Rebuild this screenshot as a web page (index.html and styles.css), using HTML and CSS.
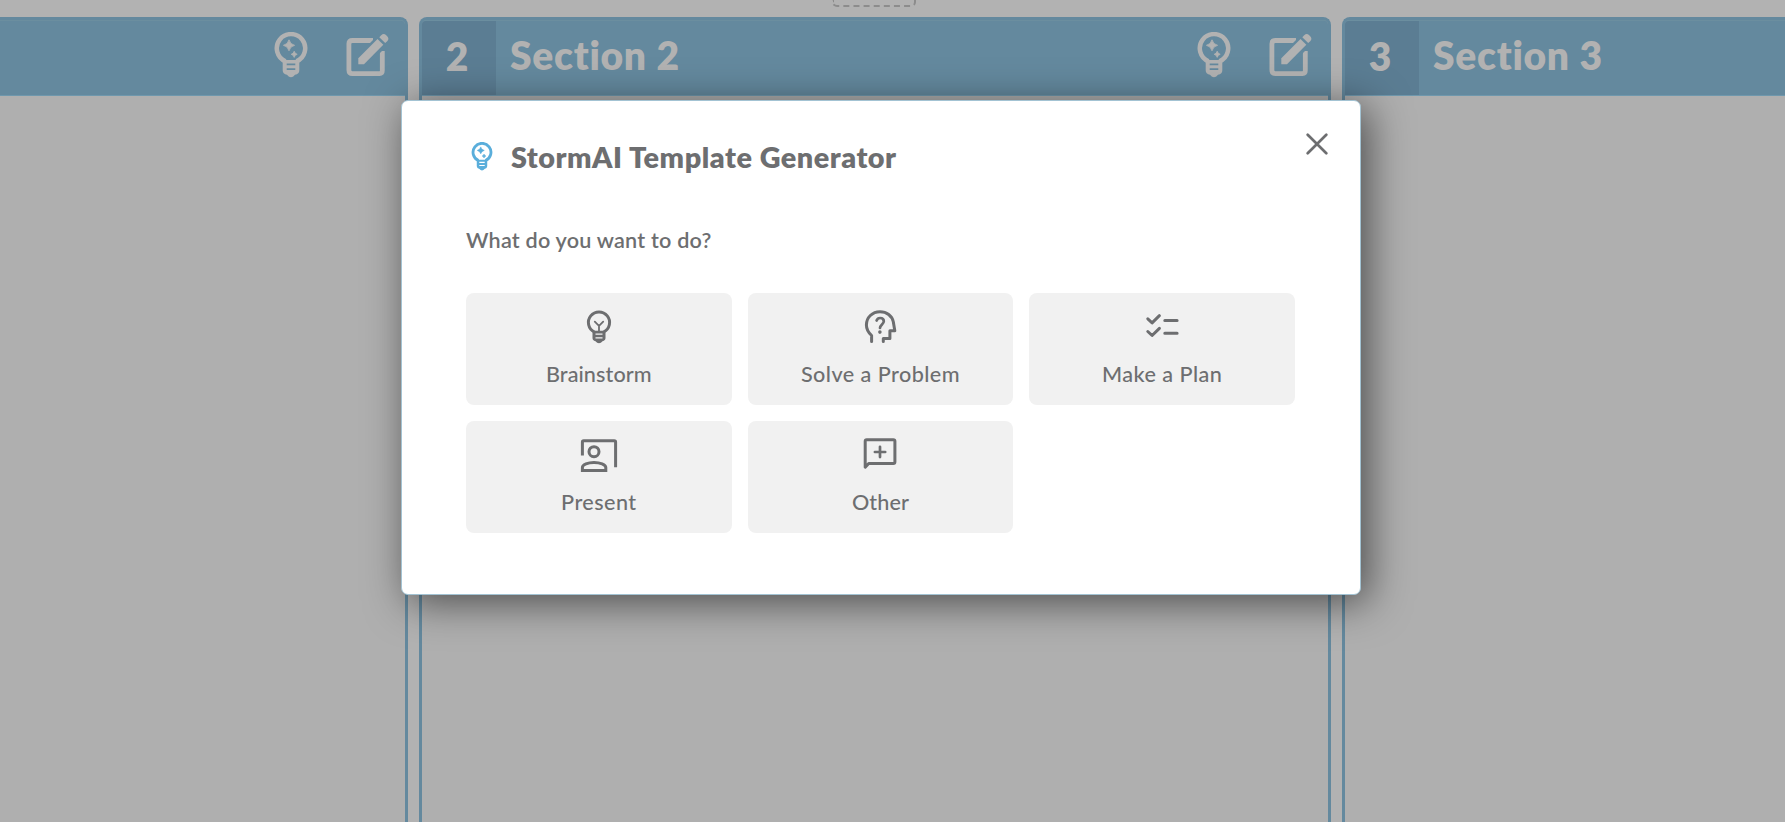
FILE: index.html
```html
<!DOCTYPE html>
<html lang="en">
<head>
<meta charset="utf-8">
<title>StormAI Template Generator</title>
<link rel="stylesheet" href="styles.css">
</head>
<body>
<svg class="defs" width="0" height="0">
  <symbol id="ai-bulb" viewBox="0 0 34 46">
    <path d="M11.5 29.4A14.2 14.2 0 1 1 22.5 29.4" fill="none" stroke="currentColor" stroke-width="4.5"/>
    <path d="M8.7 28H25.3V38.5Q25.3 42 21 42.8L19.3 44.6Q17 46 14.7 44.6L13 42.8Q8.7 42 8.7 38.5Z" fill="currentColor"/>
    <path class="cut" d="M12.7 32.3H21.3M12.7 37.2H21.3" fill="none" stroke-width="1.8"/>
    <path d="M15 7.8Q16.2 12.5 20.6 13.3Q16.2 14.2 15 18.8Q13.8 14.2 9.4 13.3Q13.8 12.5 15 7.8Z" fill="currentColor" stroke="currentColor" stroke-width=".8"/>
    <path d="M20.2 19.2Q20.8 21.7 23.2 22.3Q20.8 22.9 20.2 25.4Q19.6 22.9 17.2 22.3Q19.6 21.7 20.2 19.2Z" fill="currentColor" stroke="currentColor" stroke-width=".8"/>
  </symbol>
  <symbol id="edit" viewBox="0 0 44 44">
    <path d="M27 7.5H6.5Q2.9 7.5 2.9 10.7V37Q2.9 40.6 6.5 40.6H33.5Q36.3 40.6 36.3 37.6V18" fill="none" stroke="currentColor" stroke-width="4.8"/>
    <path class="gap" d="M10 34V24L33 1L43 11L20 34Z"/>
    <path d="M12.3 31.2V25.2L31.5 6L37.3 11.8L18 31.2Z" fill="currentColor"/>
    <path d="M33.3 4.2L35.2 2.2Q37.7-.2 40.2 2.2L41.2 3.3Q43.6 5.7 41.2 8.2L39.2 10.1Z" fill="currentColor"/>
  </symbol>
</svg>
<main class="board">
  <div class="dropzone"></div>
  <section class="column first">
    <header class="bar">
      <svg class="bulb"><use href="#ai-bulb"/></svg>
      <svg class="pen"><use href="#edit"/></svg>
    </header>
  </section>
  <section class="column">
    <header class="bar">
      <span class="number">2</span><h2 class="name">Section 2</h2>
      <svg class="bulb"><use href="#ai-bulb"/></svg>
      <svg class="pen"><use href="#edit"/></svg>
    </header>
  </section>
  <section class="column last">
    <header class="bar">
      <span class="number">3</span><h2 class="name">Section 3</h2>
    </header>
  </section>
</main>
<div class="modal" role="dialog">
  <div class="head">
    <svg class="logo"><use href="#ai-bulb"/></svg>
    <h1 class="title">StormAI Template Generator</h1>
    <svg class="close" viewBox="0 0 22 22"><path d="M1.7 1.7L20.3 20.3M20.3 1.7L1.7 20.3"/></svg>
  </div>
  <p class="question">What do you want to do?</p>
  <div class="tiles">
    <div class="tile">
      <svg class="icon" viewBox="0 0 40 40"><path d="M15.3 26A10.6 10.6 0 1 1 24.7 26"/><path class="solid" d="M13.5 24.8H26.5V32Q26.5 34.5 23.5 35.2Q22 37.2 20 37.2T16.5 35.2Q13.5 34.5 13.5 32Z"/><path class="slit" d="M16.5 28.1H23.5M16.5 31.8H23.5"/><path class="thin" d="M20 26V19.8M15.8 15.6L20 19.8L24.2 15.6"/></svg>
      <span class="label tight">Brainstorm</span>
    </div>
    <div class="tile">
      <svg class="icon" viewBox="0 0 40 40"><path d="M11.6 35.5V29.5C8.2 26.4 6.4 23 6.4 19C6.4 11.5 12.3 5.7 20 5.7C26.7 5.7 32 9.7 33.3 15.8L34.8 24.8H29.9V32.6H23.3V35.5"/><path class="mid" d="M16.6 14.5C17.2 12.8 18.5 12 20.1 12C22.3 12 23.8 13.4 23.8 15.3C23.8 18.2 20 18.7 20 22"/><circle class="solid" cx="19.9" cy="26.1" r="1.8"/></svg>
      <span class="label">Solve a Problem</span>
    </div>
    <div class="tile">
      <svg class="icon" viewBox="0 0 40 40"><path d="M5.8 12.8L10.1 16.8L17.4 9.7M5.8 25.5L10.1 29.5L17.4 22.4M22.8 14.6H35.1M22.8 27.2H35.1"/></svg>
      <span class="label">Make a Plan</span>
    </div>
    <div class="tile">
      <svg class="icon" viewBox="0 0 40 40"><path class="butt" d="M3.4 21.5V8Q3.4 6.7 4.7 6.7H35.2Q36.6 6.7 36.6 8V33.2"/><circle cx="15" cy="17.7" r="5"/><path d="M3.4 36.5V33.5C3.4 30.5 9 28.4 15 28.4S26.8 30.5 26.8 33.5V36.5Z" class="butt"/></svg>
      <span class="label">Present</span>
    </div>
    <div class="tile">
      <svg class="icon" viewBox="0 0 40 40"><path d="M5.2 33.2V7.2Q5.2 5.7 6.7 5.7H33.3Q34.9 5.7 34.9 7.2V28Q34.9 29.4 33.3 29.4H8.7Z"/><path d="M14.9 18H25.2M20 12.8V23.1" class="mid"/></svg>
      <span class="label tight">Other</span>
    </div>
  </div>
</div>
</body>
</html>
```
FILE: styles.css
```css
* { box-sizing: border-box; }
body {
  margin: 0;
  height: 822px;
  overflow: hidden;
  background: #b2b2b2;
  color: #6d6e70;
  font-family: Lato, "Open Sans", sans-serif;
  font-variant-ligatures: none;
}
h1, h2, p { margin: 0; }
.defs { position: absolute; }
.board {
  display: grid;
  grid-template-columns: 408px 912px 1fr;
  grid-template-rows: 7px 1fr;
  column-gap: 11px;
  row-gap: 10px;
  height: 822px;
}
.dropzone {
  grid-column: 1 / -1;
  width: 84px;
  height: 7px;
  margin-left: 832px;
  border: 2px dashed #8c8c8c;
  border-top: 0;
  border-radius: 0 0 5px 5px;
}
.column {
  border: 3px solid #64899e;
  border-bottom: 0;
  border-radius: 8px 8px 0 0;
  background: #afafaf;
}
.first { border-left: 0; border-top-left-radius: 0; }
.last { border-right: 0; border-top-right-radius: 0; }
.bar {
  display: flex;
  align-items: flex-start;
  height: 76px;
  border-top: 1px solid #6b8e9f;
  border-bottom: 1px solid #6f98ad;
  border-radius: 4px 4px 0 0;
  background: #64899e;
  color: #b2b2b2;
  font-size: 39px;
  font-weight: 800;
  line-height: 69px;
}
.first .bar { justify-content: flex-end; border-top-left-radius: 0; }
.last .bar { border-top-right-radius: 0; }
.number {
  width: 74px;
  height: 74px;
  padding-right: 4px;
  border-radius: 4px 0 0 0;
  background: #5b7d93;
  text-align: center;
  font-size: 39px;
  line-height: 71px;
}
.name {
  flex: 1;
  padding-left: 14px;
  font: inherit;
  letter-spacing: .7px;
}
.bulb { width: 34px; height: 46px; margin-top: 11px; color: #b2b2b2; --cut: #64899e; }
.pen { width: 44px; height: 44px; margin: 12px 15px 0 38px; }
.cut { stroke: var(--cut); }
.gap { fill: #64899e; }

.modal {
  position: absolute;
  top: 100px;
  left: 401px;
  width: 960px;
  height: 495px;
  padding: 0 65px 0 64px;
  border: 1px solid #a3c3d3;
  border-radius: 7px;
  background: #fff;
  box-shadow: 7px 7px 42px rgba(0, 0, 0, .57);
}
.head { display: flex; align-items: flex-start; height: 114px; }
.logo { width: 22px; height: 29px; margin: 41px 18px 0 5px; color: #5aaedb; --cut: #fff; }
.title {
  flex: 1;
  padding-top: 37px;
  font-size: 28.8px;
  font-weight: 800;
  line-height: 39px;
  letter-spacing: .53px;
}
.close {
  width: 22px;
  height: 22px;
  margin: 32px -33px 0 0;
  fill: none;
  stroke: #6d6e70;
  stroke-width: 2.7;
  stroke-linecap: round;
}
.question {
  height: 78px;
  font-size: 21.6px;
  font-weight: 600;
  line-height: 51px;
  letter-spacing: .22px;
}
.tiles {
  display: grid;
  grid-template-columns: repeat(3, 1fr);
  grid-auto-rows: 112px;
  gap: 16px;
}
.tile {
  display: flex;
  flex-direction: column;
  align-items: center;
  padding-top: 13px;
  border-radius: 8px;
  background: #f1f1f1;
}
.icon {
  width: 40px;
  height: 40px;
  fill: none;
  stroke: #6d6e70;
  stroke-width: 3;
  stroke-linecap: round;
  stroke-linejoin: round;
}
.butt { stroke-linecap: butt; stroke-linejoin: miter; }
.solid { fill: #6d6e70; stroke: none; }
.slit { stroke: #f1f1f1; stroke-width: 1.2; stroke-linecap: butt; }
.thin { stroke-width: 1.8; }
.mid { stroke-width: 2.7; }
.label {
  margin-top: 13px;
  font-size: 21.6px;
  font-weight: 500;
  line-height: 31px;
  letter-spacing: .45px;
}
.tight { letter-spacing: .1px; }
```
